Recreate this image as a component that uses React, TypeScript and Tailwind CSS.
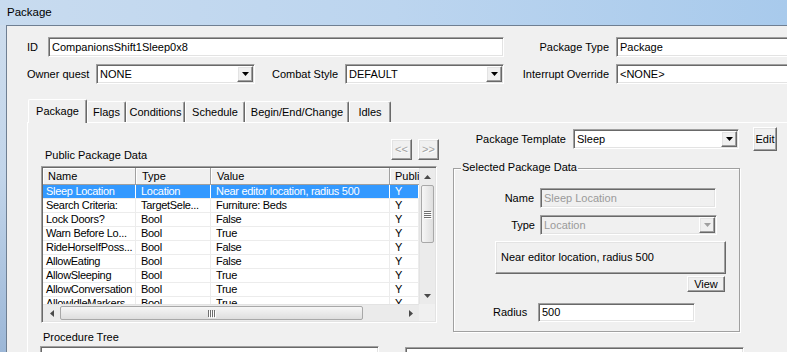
import { clsx } from 'clsx'

const sunken =
  'border border-t-[#a0a0a0] border-l-[#a0a0a0] border-r-white border-b-white shadow-[inset_1px_1px_0_#696969,inset_-1px_-1px_0_#e3e3e3]'
const raised =
  'border border-t-white border-l-white border-r-[#696969] border-b-[#696969] bg-[#f0f0f0] shadow-[inset_-1px_-1px_0_#a0a0a0,inset_1px_1px_0_#e3e3e3]'

const rows = [
  ['Sleep Location', 'Location', 'Near editor location, radius 500', 'Y'],
  ['Search Criteria:', 'TargetSele...', 'Furniture: Beds', 'Y'],
  ['Lock Doors?', 'Bool', 'False', 'Y'],
  ['Warn Before Lo...', 'Bool', 'True', 'Y'],
  ['RideHorseIfPoss...', 'Bool', 'False', 'Y'],
  ['AllowEating', 'Bool', 'False', 'Y'],
  ['AllowSleeping', 'Bool', 'True', 'Y'],
  ['AllowConversation', 'Bool', 'True', 'Y'],
  ['AllowIdleMarkers', 'Bool', 'True', 'Y'],
]

const tabs = [
  { label: 'Flags', w: 'w-[39px]' },
  { label: 'Conditions', w: 'w-[59px]' },
  { label: 'Schedule', w: 'w-[60px]' },
  { label: 'Begin/End/Change', w: 'w-[104px]' },
  { label: 'Idles', w: 'w-[42px]' },
]

function Tri({ dir, color = '#3c3c3c', size = 7 }: { dir: 'up' | 'down' | 'left' | 'right'; color?: string; size?: number }) {
  const h = Math.ceil(size / 2)
  if (dir === 'up' || dir === 'down') {
    const d = dir === 'down' ? `M0 0H${size}L${size / 2} ${h}Z` : `M0 ${h}L${size / 2} 0L${size} ${h}Z`
    return (
      <svg width={size} height={h} viewBox={`0 0 ${size} ${h}`}>
        <path d={d} fill={color} />
      </svg>
    )
  }
  const d = dir === 'right' ? `M0 0V${size}L${h} ${size / 2}Z` : `M${h} 0V${size}L0 ${size / 2}Z`
  return (
    <svg width={h} height={size} viewBox={`0 0 ${h} ${size}`}>
      <path d={d} fill={color} />
    </svg>
  )
}

function Field({ value, className, disabled }: { value: string; className: string; disabled?: boolean }) {
  return (
    <div
      className={clsx(
        sunken,
        'shrink-0 flex items-center pl-[3px] whitespace-nowrap overflow-hidden',
        disabled ? 'bg-[#f0f0f0] text-[#9a9a9a]' : 'bg-white',
        className
      )}
    >
      {value}
    </div>
  )
}

function Combo({ value, className, disabled }: { value: string; className: string; disabled?: boolean }) {
  return (
    <div
      className={clsx(
        sunken,
        'shrink-0 h-[20px] flex items-center pl-[3px] pr-[1px]',
        disabled ? 'bg-[#f0f0f0] text-[#9a9a9a]' : 'bg-white',
        className
      )}
    >
      <span className="flex-1 whitespace-nowrap overflow-hidden">{value}</span>
      <div className={clsx(raised, 'w-[16px] h-[16px] flex items-center justify-center')}>
        <Tri dir="down" color={disabled ? '#a0a0a0' : '#000'} />
      </div>
    </div>
  )
}

function Grip({ vertical }: { vertical?: boolean }) {
  return (
    <div className={clsx('flex', vertical ? 'flex-col gap-[1px]' : 'gap-[1px]')}>
      {[0, 1, 2, 3].map((i) => (
        <span
          key={i}
          className={clsx(
            'bg-[#6f6f6f] shadow-[1px_1px_0_#fff]',
            vertical ? 'w-[7px] h-[1px]' : 'w-[1px] h-[7px]'
          )}
        />
      ))}
    </div>
  )
}

function ListView() {
  return (
    <div className={clsx(sunken, 'mt-[6px] w-[396px] h-[157px] p-[1px] bg-white flex flex-col')}>
      <div className="flex h-[136px]">
        {/* Columns */}
        <div className="w-[376px] flex flex-col overflow-hidden">
          <div className="flex h-[17px] shrink-0 bg-[#f0f0f0] border-b border-[#a0a0a0]">
            <div className="w-[93px] pl-[5px] flex items-center border-r border-[#a0a0a0] shadow-[inset_1px_1px_0_#fff]">Name</div>
            <div className="w-[75px] pl-[6px] flex items-center border-r border-[#a0a0a0] shadow-[inset_1px_1px_0_#fff]">Type</div>
            <div className="w-[179px] pl-[6px] flex items-center border-r border-[#a0a0a0] shadow-[inset_1px_1px_0_#fff]">Value</div>
            <div className="flex-1 pl-[5px] flex items-center whitespace-nowrap overflow-hidden shadow-[inset_1px_1px_0_#fff]">Publi</div>
          </div>
          {rows.map((r, i) => {
            const sel = i === 0
            return (
              <div key={r[0]} className="flex h-[14px] shrink-0 border-b border-[#ececec] tracking-[-0.3px]">
                {r.map((c, j) => (
                  <div
                    key={j}
                    className={clsx(
                      'flex items-center whitespace-nowrap overflow-hidden border-r',
                      j === 0 && 'w-[93px] pl-[3px]',
                      j === 1 && 'w-[75px] pl-[5px]',
                      j === 2 && 'w-[179px] pl-[5px]',
                      j === 3 && 'flex-1 pl-[5px]',
                      sel ? 'bg-[#3399ff] text-white border-white' : 'border-[#ececec]'
                    )}
                  >
                    {c}
                  </div>
                ))}
              </div>
            )
          })}
        </div>
        {/* Vertical scrollbar */}
        <div className="w-[16px] flex flex-col bg-[#ebebeb] border-l border-[#e3e3e3]">
          <div className="h-[17px] flex items-center justify-center">
            <Tri dir="up" size={7} color="#4a4a4a" />
          </div>
          <div className="h-[58px] mx-[1px] rounded-[2px] border border-[#a8a8a8] bg-linear-to-r from-[#f6f6f6] to-[#dedede] flex items-center justify-center">
            <Grip vertical />
          </div>
          <div className="flex-1" />
          <div className="h-[17px] flex items-center justify-center">
            <Tri dir="down" size={7} color="#4a4a4a" />
          </div>
        </div>
      </div>
      {/* Horizontal scrollbar */}
      <div className="flex h-[17px]">
        <div className="w-[376px] flex bg-[#ebebeb] border-t border-[#e3e3e3]">
          <div className="w-[17px] flex items-center justify-center">
            <Tri dir="left" size={7} color="#4a4a4a" />
          </div>
          <div className="w-[303px] my-[1px] rounded-[2px] border border-[#a8a8a8] bg-linear-to-b from-[#f6f6f6] to-[#dedede] flex items-center justify-center">
            <Grip />
          </div>
          <div className="flex-1" />
          <div className="w-[17px] flex items-center justify-center">
            <Tri dir="right" size={7} color="#4a4a4a" />
          </div>
        </div>
        <div className="flex-1 bg-[#f0f0f0]" />
      </div>
    </div>
  )
}

export default function App() {
  return (
    <div className="w-[787px] h-[352px] overflow-hidden flex flex-col bg-linear-to-b from-[#cfdeee] via-[#c2d5ea] to-[#9cb7d7] font-['Liberation_Sans',Arial,sans-serif] text-[11px] leading-[13px] text-black">
      {/* Title bar */}
      <div className="h-[25px] shrink-0 flex items-center pl-[7px] text-[11.5px] bg-linear-to-r from-[#c8dbef] via-[#bcd5ef] to-[#a8caec]">
        Package
      </div>

      <div className="flex flex-1 min-h-0 pl-[6px]">
        <div className="flex-1 min-w-0 flex flex-col overflow-hidden bg-[#f0f0f0] border-l border-t border-[#6f7f92]">
          {/* ID row */}
          <div className="mt-[11px] flex items-center h-[20px] shrink-0">
            <div className="w-[41px] shrink-0 pl-[20px]">ID</div>
            <Field className="w-[456px] h-[20px]" value="CompanionsShift1Sleep0x8" />
            <div className="w-[112px] shrink-0 text-right pr-[7px]">Package Type</div>
            <Field className="w-[200px] h-[20px]" value="Package" />
          </div>

          {/* Owner row */}
          <div className="mt-[7px] flex items-center h-[20px] shrink-0">
            <div className="w-[89px] shrink-0 pl-[20px]">Owner quest</div>
            <Combo className="w-[159px]" value="NONE" />
            <div className="w-[90px] shrink-0 text-right pr-[7px]">Combat Style</div>
            <Combo className="w-[159px]" value="DEFAULT" />
            <div className="w-[112px] shrink-0 text-right pr-[7px] whitespace-nowrap">Interrupt Override</div>
            <Field className="w-[200px] h-[20px]" value="<NONE>" />
          </div>

          {/* Tabs */}
          <div className="mt-[15px] flex items-end h-[23px] pl-[21px] shrink-0 relative z-10">
            <div className="w-[59px] h-[24px] mb-[-1px] shrink-0 bg-[#f0f0f0] rounded-t-[2px] border-t border-l border-white border-r border-r-[#696969] shadow-[inset_-1px_0_0_#a0a0a0] flex items-center justify-center">
              Package
            </div>
            {tabs.map((t) => (
              <div
                key={t.label}
                className={clsx(
                  t.w,
                  'h-[21px] shrink-0 rounded-t-[2px] border-t border-l border-white border-r border-r-[#696969] shadow-[inset_-1px_0_0_#a0a0a0] flex items-center justify-center pt-[1px] whitespace-nowrap'
                )}
              >
                {t.label}
              </div>
            ))}
          </div>

          {/* Tab panel */}
          <div className="ml-[20px] flex-1 flex border-t border-l border-white">
            {/* Left column */}
            <div className="ml-[13px] w-[398px] shrink-0 flex flex-col">
              <div className="mt-[16px] h-[21px] flex items-end justify-between">
                <div className="pl-[4px] mb-[-2px]">Public Package Data</div>
                <div className="flex gap-[6px]">
                  <div className={clsx(raised, 'w-[21px] h-[21px] flex items-center justify-center text-[#a0a0a0] [text-shadow:1px_1px_0_#fff]')}>
                    &lt;&lt;
                  </div>
                  <div className={clsx(raised, 'w-[21px] h-[21px] flex items-center justify-center text-[#a0a0a0] [text-shadow:1px_1px_0_#fff]')}>
                    &gt;&gt;
                  </div>
                </div>
              </div>
              <ListView />
              <div className="mt-[8px] pl-[2px]">Procedure Tree</div>
              <div className={clsx(sunken, 'mt-[2px] ml-[-1px] w-[339px] h-[30px] bg-white shrink-0')} />
            </div>

            {/* Right column */}
            <div className="ml-[14px] w-[300px] shrink-0 flex flex-col">
              <div className="mt-[4px] h-[24px] flex items-center">
                <div className="w-[120px] shrink-0 text-right pr-[7px]">Package Template</div>
                <Combo className="w-[166px]" value="Sleep" />
                <div className={clsx(raised, 'ml-[14px] w-[24px] h-[24px] shrink-0 flex items-center justify-center')}>Edit</div>
              </div>

              {/* Selected Package Data group */}
              <div className="mt-[17px] w-[287px] h-[164px] shrink-0 relative border border-[#a0a0a0] shadow-[inset_1px_1px_0_#fff,1px_1px_0_#fff] flex flex-col">
                <span className="absolute left-[7px] top-[-8px] px-[1px] bg-[#f0f0f0]">Selected Package Data</span>

                <div className="mt-[19px] h-[20px] flex items-center">
                  <div className="w-[86px] shrink-0 text-right pr-[6px]">Name</div>
                  <Field className="w-[176px] h-[20px]" value="Sleep Location" disabled />
                </div>

                <div className="mt-[7px] h-[20px] flex items-center">
                  <div className="w-[86px] shrink-0 text-right pr-[5px]">Type</div>
                  <Combo className="w-[177px]" value="Location" disabled />
                </div>

                <div className={clsx(raised, 'mt-[6px] ml-[41px] w-[231px] h-[33px] shrink-0 flex items-center pl-[5px]')}>
                  Near editor location, radius 500
                </div>

                <div className={clsx(raised, 'mt-[2px] ml-[233px] w-[38px] h-[16px] shrink-0 flex items-center justify-center')}>
                  View
                </div>

                <div className="mt-[11px] h-[19px] flex items-center">
                  <div className="w-[84px] shrink-0 pl-[39px]">Radius</div>
                  <Field className="w-[157px] h-[19px]" value="500" />
                </div>
              </div>

              <div className={clsx(sunken, 'mt-[15px] ml-[-48px] w-[339px] h-[20px] bg-white shrink-0')} />
            </div>
          </div>
        </div>
      </div>
    </div>
  )
}
